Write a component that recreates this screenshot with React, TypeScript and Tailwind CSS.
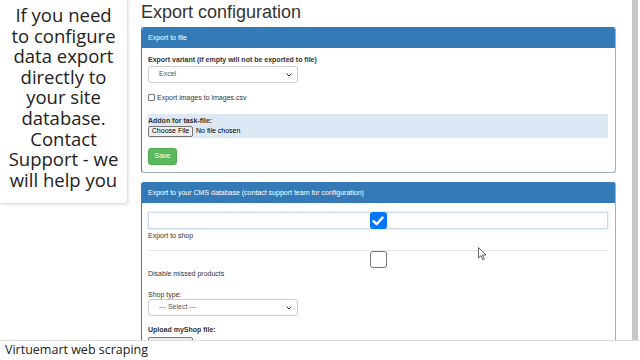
const Chevron = () => (
  <svg width="6" height="4" viewBox="0 0 6 4" className="shrink-0">
    <path d="M0.6 0.6 L3 3 L5.4 0.6" fill="none" stroke="#333" strokeWidth="1" />
  </svg>
);

const Select = ({ value }: { value: string }) => (
  <div className="w-[150px] h-[17px] border border-[#cccccc] rounded-[3px] bg-white flex items-center justify-between pl-[10px] pr-[5px] text-[7px] text-[#555]">
    <span>{value}</span>
    <Chevron />
  </div>
);

const PanelHeader = ({ title }: { title: string }) => (
  <div className="h-[20px] bg-[#337ab7] text-white text-[7px] flex items-center px-[6px]">
    {title}
  </div>
);

const lines = [
  "If you need",
  "to configure",
  "data export",
  "directly to",
  "your site",
  "database.",
  "Contact",
  "Support - we",
  "will help you",
];

const App = () => {
  return (
    <div className="relative w-[640px] h-[360px] bg-white overflow-hidden flex flex-col font-['Liberation_Sans',Arial,sans-serif] text-[#333]">
      <div className="flex h-[340px] overflow-hidden">
        <aside className="w-[128px] h-[204px] shrink-0 border-r border-b border-[#e2e2e2] rounded-br-[4px] shadow-[1px_1px_3px_rgba(0,0,0,0.10)] pt-[7px] flex flex-col items-center text-[18.5px] text-[#222] font-['Open_Sans',sans-serif] whitespace-nowrap">
          {lines.map((l) => (
            <div key={l} className="h-[20.6px] leading-[16px]">
              {l}
            </div>
          ))}
        </aside>

        <main className="flex-1 pl-[13px] pr-[16px]">
          <h1 className="pt-[3px] mb-[6px] text-[18px] leading-[18px] text-[#333]">
            Export configuration
          </h1>

          <section className="border border-[#337ab7] border-r-[#9fb0c2] border-b-[#9fb0c2] rounded-[3px] overflow-hidden">
            <PanelHeader title="Export to file" />
            <div className="pl-[6px] pr-[7px] pt-[7px] pb-[7px]">
              <div className="text-[7px] leading-[9px] font-bold">
                Export variant (if empty will not be exported to file)
              </div>
              <div className="mt-[2px]">
                <Select value="Excel" />
              </div>
              <div className="mt-[10px] flex items-center gap-[2px] text-[7px] leading-[9px]">
                <span className="w-[7px] h-[7px] border border-[#767676] rounded-[1px] bg-white" />
                <span>Export images to images.csv</span>
              </div>
              <div className="mt-[12px] bg-[#dce9f5] pt-[2px] pb-[1px]">
                <div className="text-[7px] leading-[9px] font-bold">Addon for task-file:</div>
                <div className="mt-[1px] flex items-center gap-[3px] text-[7px]">
                  <span className="h-[11px] w-[45px] bg-[#efefef] border border-[#767676] rounded-[2px] flex items-center justify-center text-black">
                    Choose File
                  </span>
                  <span className="text-black">No file chosen</span>
                </div>
              </div>
              <button className="mt-[10px] w-[29px] h-[17px] bg-[#5cb85c] border border-[#4cae4c] rounded-[3px] text-white text-[7px] flex items-center justify-center">
                Save
              </button>
            </div>
          </section>

          <section className="mt-[9px] border border-[#337ab7] border-r-[#9fb0c2] rounded-t-[3px]">
            <PanelHeader title="Export to your CMS database (contact support team for configuration)" />
            <div className="pl-[6px] pr-[7px] pt-[9px]">
              <div className="h-[17px] border border-[#c9d9ea] shadow-[0_0_2px_rgba(102,175,233,0.45)] flex justify-center">
                <span className="w-[17px] h-[17px] -mt-[1px] rounded-[3px] bg-[#0075ff] flex items-center justify-center">
                  <svg width="12" height="10" viewBox="0 0 12 10">
                    <path d="M1.5 5.2 L4.6 8.2 L10.5 1.6" fill="none" stroke="#fff" strokeWidth="2.4" strokeLinecap="round" strokeLinejoin="round" />
                  </svg>
                </span>
              </div>
              <div className="mt-[2px] text-[7px] leading-[9px]">Export to shop</div>
              <div className="mt-[10px] h-px bg-[#e8e8e8]" />
              <div className="flex justify-center">
                <span className="w-[17px] h-[17px] border border-[#767676] rounded-[3px] bg-white" />
              </div>
              <div className="mt-[1px] text-[7px] leading-[9px]">Disable missed products</div>
              <div className="mt-[12px] text-[7px] leading-[9px]">Shop type:</div>
              <Select value="--- Select ---" />
              <div className="mt-[9px] text-[7px] leading-[9px] font-bold">Upload myShop file:</div>
              <div className="mt-[3px] h-[11px] w-[45px] bg-[#efefef] border border-[#767676] rounded-[2px]" />
            </div>
          </section>
        </main>

        <div className="w-[6px] shrink-0 bg-[#c8c8c8]" />
        <div className="w-[2px] shrink-0" />
      </div>

      <footer className="h-[20px] border-t border-[#dddddd] bg-white pl-[5px] flex items-center text-[12.5px] text-[#222] font-['Open_Sans',sans-serif]">
        Virtuemart web scraping
      </footer>

      {/* mouse pointer */}
      <svg className="absolute left-[478px] top-[247px]" width="9" height="14" viewBox="0 0 9 14">
        <path d="M0.5 0.5 L0.5 11 L3 8.6 L4.8 12.8 L6.3 12.1 L4.6 8 L8 8 Z" fill="#fff" stroke="#555" strokeWidth="0.9" strokeLinejoin="round" />
      </svg>
    </div>
  );
};

export default App;
